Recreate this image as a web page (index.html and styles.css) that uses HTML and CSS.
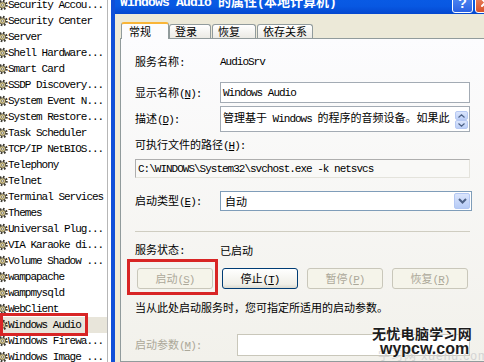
FILE: index.html
```html
<!DOCTYPE html>
<html lang="zh-CN">
<head>
    <meta charset="UTF-8">
    <title>Windows Audio 的属性</title>
    <link rel="stylesheet" href="styles.css">
</head>
<body>
    <div class="services">
        <div class="service-list">
            <div class="service"><svg width="11" height="12" viewBox="0 0 12 12"><circle cx="6" cy="6" r="4.4" fill="none" stroke="#3d3a30" stroke-width="2.6" stroke-dasharray="1.7 1.75"/><circle cx="6" cy="6" r="3.4" fill="#d8c98e" stroke="#3d3a30" stroke-width="0.8"/><circle cx="6" cy="6" r="1.2" fill="#fff" stroke="#3d3a30" stroke-width="0.6"/></svg><span class="lat">Security Accou...</span></div>
            <div class="service"><svg width="11" height="12" viewBox="0 0 12 12"><circle cx="6" cy="6" r="4.4" fill="none" stroke="#3d3a30" stroke-width="2.6" stroke-dasharray="1.7 1.75"/><circle cx="6" cy="6" r="3.4" fill="#d8c98e" stroke="#3d3a30" stroke-width="0.8"/><circle cx="6" cy="6" r="1.2" fill="#fff" stroke="#3d3a30" stroke-width="0.6"/></svg><span class="lat">Security Center</span></div>
            <div class="service"><svg width="11" height="12" viewBox="0 0 12 12"><circle cx="6" cy="6" r="4.4" fill="none" stroke="#3d3a30" stroke-width="2.6" stroke-dasharray="1.7 1.75"/><circle cx="6" cy="6" r="3.4" fill="#d8c98e" stroke="#3d3a30" stroke-width="0.8"/><circle cx="6" cy="6" r="1.2" fill="#fff" stroke="#3d3a30" stroke-width="0.6"/></svg><span class="lat">Server</span></div>
            <div class="service"><svg width="11" height="12" viewBox="0 0 12 12"><circle cx="6" cy="6" r="4.4" fill="none" stroke="#3d3a30" stroke-width="2.6" stroke-dasharray="1.7 1.75"/><circle cx="6" cy="6" r="3.4" fill="#d8c98e" stroke="#3d3a30" stroke-width="0.8"/><circle cx="6" cy="6" r="1.2" fill="#fff" stroke="#3d3a30" stroke-width="0.6"/></svg><span class="lat">Shell Hardware...</span></div>
            <div class="service"><svg width="11" height="12" viewBox="0 0 12 12"><circle cx="6" cy="6" r="4.4" fill="none" stroke="#3d3a30" stroke-width="2.6" stroke-dasharray="1.7 1.75"/><circle cx="6" cy="6" r="3.4" fill="#d8c98e" stroke="#3d3a30" stroke-width="0.8"/><circle cx="6" cy="6" r="1.2" fill="#fff" stroke="#3d3a30" stroke-width="0.6"/></svg><span class="lat">Smart Card</span></div>
            <div class="service"><svg width="11" height="12" viewBox="0 0 12 12"><circle cx="6" cy="6" r="4.4" fill="none" stroke="#3d3a30" stroke-width="2.6" stroke-dasharray="1.7 1.75"/><circle cx="6" cy="6" r="3.4" fill="#d8c98e" stroke="#3d3a30" stroke-width="0.8"/><circle cx="6" cy="6" r="1.2" fill="#fff" stroke="#3d3a30" stroke-width="0.6"/></svg><span class="lat">SSDP Discovery...</span></div>
            <div class="service"><svg width="11" height="12" viewBox="0 0 12 12"><circle cx="6" cy="6" r="4.4" fill="none" stroke="#3d3a30" stroke-width="2.6" stroke-dasharray="1.7 1.75"/><circle cx="6" cy="6" r="3.4" fill="#d8c98e" stroke="#3d3a30" stroke-width="0.8"/><circle cx="6" cy="6" r="1.2" fill="#fff" stroke="#3d3a30" stroke-width="0.6"/></svg><span class="lat">System Event N...</span></div>
            <div class="service"><svg width="11" height="12" viewBox="0 0 12 12"><circle cx="6" cy="6" r="4.4" fill="none" stroke="#3d3a30" stroke-width="2.6" stroke-dasharray="1.7 1.75"/><circle cx="6" cy="6" r="3.4" fill="#d8c98e" stroke="#3d3a30" stroke-width="0.8"/><circle cx="6" cy="6" r="1.2" fill="#fff" stroke="#3d3a30" stroke-width="0.6"/></svg><span class="lat">System Restore...</span></div>
            <div class="service"><svg width="11" height="12" viewBox="0 0 12 12"><circle cx="6" cy="6" r="4.4" fill="none" stroke="#3d3a30" stroke-width="2.6" stroke-dasharray="1.7 1.75"/><circle cx="6" cy="6" r="3.4" fill="#d8c98e" stroke="#3d3a30" stroke-width="0.8"/><circle cx="6" cy="6" r="1.2" fill="#fff" stroke="#3d3a30" stroke-width="0.6"/></svg><span class="lat">Task Scheduler</span></div>
            <div class="service"><svg width="11" height="12" viewBox="0 0 12 12"><circle cx="6" cy="6" r="4.4" fill="none" stroke="#3d3a30" stroke-width="2.6" stroke-dasharray="1.7 1.75"/><circle cx="6" cy="6" r="3.4" fill="#d8c98e" stroke="#3d3a30" stroke-width="0.8"/><circle cx="6" cy="6" r="1.2" fill="#fff" stroke="#3d3a30" stroke-width="0.6"/></svg><span class="lat">TCP/IP NetBIOS...</span></div>
            <div class="service"><svg width="11" height="12" viewBox="0 0 12 12"><circle cx="6" cy="6" r="4.4" fill="none" stroke="#3d3a30" stroke-width="2.6" stroke-dasharray="1.7 1.75"/><circle cx="6" cy="6" r="3.4" fill="#d8c98e" stroke="#3d3a30" stroke-width="0.8"/><circle cx="6" cy="6" r="1.2" fill="#fff" stroke="#3d3a30" stroke-width="0.6"/></svg><span class="lat">Telephony</span></div>
            <div class="service"><svg width="11" height="12" viewBox="0 0 12 12"><circle cx="6" cy="6" r="4.4" fill="none" stroke="#3d3a30" stroke-width="2.6" stroke-dasharray="1.7 1.75"/><circle cx="6" cy="6" r="3.4" fill="#d8c98e" stroke="#3d3a30" stroke-width="0.8"/><circle cx="6" cy="6" r="1.2" fill="#fff" stroke="#3d3a30" stroke-width="0.6"/></svg><span class="lat">Telnet</span></div>
            <div class="service"><svg width="11" height="12" viewBox="0 0 12 12"><circle cx="6" cy="6" r="4.4" fill="none" stroke="#3d3a30" stroke-width="2.6" stroke-dasharray="1.7 1.75"/><circle cx="6" cy="6" r="3.4" fill="#d8c98e" stroke="#3d3a30" stroke-width="0.8"/><circle cx="6" cy="6" r="1.2" fill="#fff" stroke="#3d3a30" stroke-width="0.6"/></svg><span class="lat">Terminal Services</span></div>
            <div class="service"><svg width="11" height="12" viewBox="0 0 12 12"><circle cx="6" cy="6" r="4.4" fill="none" stroke="#3d3a30" stroke-width="2.6" stroke-dasharray="1.7 1.75"/><circle cx="6" cy="6" r="3.4" fill="#d8c98e" stroke="#3d3a30" stroke-width="0.8"/><circle cx="6" cy="6" r="1.2" fill="#fff" stroke="#3d3a30" stroke-width="0.6"/></svg><span class="lat">Themes</span></div>
            <div class="service"><svg width="11" height="12" viewBox="0 0 12 12"><circle cx="6" cy="6" r="4.4" fill="none" stroke="#3d3a30" stroke-width="2.6" stroke-dasharray="1.7 1.75"/><circle cx="6" cy="6" r="3.4" fill="#d8c98e" stroke="#3d3a30" stroke-width="0.8"/><circle cx="6" cy="6" r="1.2" fill="#fff" stroke="#3d3a30" stroke-width="0.6"/></svg><span class="lat">Universal Plug...</span></div>
            <div class="service"><svg width="11" height="12" viewBox="0 0 12 12"><circle cx="6" cy="6" r="4.4" fill="none" stroke="#3d3a30" stroke-width="2.6" stroke-dasharray="1.7 1.75"/><circle cx="6" cy="6" r="3.4" fill="#d8c98e" stroke="#3d3a30" stroke-width="0.8"/><circle cx="6" cy="6" r="1.2" fill="#fff" stroke="#3d3a30" stroke-width="0.6"/></svg><span class="lat">VIA Karaoke di...</span></div>
            <div class="service"><svg width="11" height="12" viewBox="0 0 12 12"><circle cx="6" cy="6" r="4.4" fill="none" stroke="#3d3a30" stroke-width="2.6" stroke-dasharray="1.7 1.75"/><circle cx="6" cy="6" r="3.4" fill="#d8c98e" stroke="#3d3a30" stroke-width="0.8"/><circle cx="6" cy="6" r="1.2" fill="#fff" stroke="#3d3a30" stroke-width="0.6"/></svg><span class="lat">Volume Shadow ...</span></div>
            <div class="service"><svg width="11" height="12" viewBox="0 0 12 12"><circle cx="6" cy="6" r="4.4" fill="none" stroke="#3d3a30" stroke-width="2.6" stroke-dasharray="1.7 1.75"/><circle cx="6" cy="6" r="3.4" fill="#d8c98e" stroke="#3d3a30" stroke-width="0.8"/><circle cx="6" cy="6" r="1.2" fill="#fff" stroke="#3d3a30" stroke-width="0.6"/></svg><span class="lat">wampapache</span></div>
            <div class="service"><svg width="11" height="12" viewBox="0 0 12 12"><circle cx="6" cy="6" r="4.4" fill="none" stroke="#3d3a30" stroke-width="2.6" stroke-dasharray="1.7 1.75"/><circle cx="6" cy="6" r="3.4" fill="#d8c98e" stroke="#3d3a30" stroke-width="0.8"/><circle cx="6" cy="6" r="1.2" fill="#fff" stroke="#3d3a30" stroke-width="0.6"/></svg><span class="lat">wampmysqld</span></div>
            <div class="service"><svg width="11" height="12" viewBox="0 0 12 12"><circle cx="6" cy="6" r="4.4" fill="none" stroke="#3d3a30" stroke-width="2.6" stroke-dasharray="1.7 1.75"/><circle cx="6" cy="6" r="3.4" fill="#d8c98e" stroke="#3d3a30" stroke-width="0.8"/><circle cx="6" cy="6" r="1.2" fill="#fff" stroke="#3d3a30" stroke-width="0.6"/></svg><span class="lat">WebClient</span></div>
            <div class="service selected"><svg width="11" height="12" viewBox="0 0 12 12"><circle cx="6" cy="6" r="4.4" fill="none" stroke="#3d3a30" stroke-width="2.6" stroke-dasharray="1.7 1.75"/><circle cx="6" cy="6" r="3.4" fill="#d8c98e" stroke="#3d3a30" stroke-width="0.8"/><circle cx="6" cy="6" r="1.2" fill="#fff" stroke="#3d3a30" stroke-width="0.6"/></svg><span class="lat">Windows Audio</span><div class="mark"></div></div>
            <div class="service"><svg width="11" height="12" viewBox="0 0 12 12"><circle cx="6" cy="6" r="4.4" fill="none" stroke="#3d3a30" stroke-width="2.6" stroke-dasharray="1.7 1.75"/><circle cx="6" cy="6" r="3.4" fill="#d8c98e" stroke="#3d3a30" stroke-width="0.8"/><circle cx="6" cy="6" r="1.2" fill="#fff" stroke="#3d3a30" stroke-width="0.6"/></svg><span class="lat">Windows Firewa...</span></div>
            <div class="service"><svg width="11" height="12" viewBox="0 0 12 12"><circle cx="6" cy="6" r="4.4" fill="none" stroke="#3d3a30" stroke-width="2.6" stroke-dasharray="1.7 1.75"/><circle cx="6" cy="6" r="3.4" fill="#d8c98e" stroke="#3d3a30" stroke-width="0.8"/><circle cx="6" cy="6" r="1.2" fill="#fff" stroke="#3d3a30" stroke-width="0.6"/></svg><span class="lat">Windows Image ...</span></div>
        </div>
    </div>

    <div class="dialog">
        <div class="titlebar">
            <span class="title"><span class="lat">Windows Audio </span>的属性<span class="lat">(</span>本地计算机<span class="lat">)</span></span>
            <div class="title-btn help">?</div>
            <div class="title-btn close">
                <svg width="11" height="11" viewBox="0 0 11 11"><path d="M2 2l7 7M9 2l-7 7" stroke="#fff" stroke-width="2" stroke-linecap="round"/></svg>
            </div>
        </div>

        <div class="sheet">
            <div class="tabs">
                <div class="tab active">常规</div>
                <div class="tab tab-login">登录</div>
                <div class="tab tab-recover">恢复</div>
                <div class="tab tab-deps">依存关系</div>
            </div>

            <div class="panel">
                <div class="field">
                    <span class="label">服务名称<span class="lat">:</span></span>
                    <span class="lat">AudioSrv</span>
                </div>

                <div class="field field-name">
                    <span class="label">显示名称<span class="lat">(<u>N</u>):</span></span>
                    <div class="textbox name-box"><span class="lat">Windows Audio</span></div>
                </div>

                <div class="field field-desc">
                    <span class="label">描述<span class="lat">(<u>D</u>):</span></span>
                    <div class="textbox desc-box">
                        <span class="desc-text">管理基于<span class="lat"> Windows </span>的程序的音频设备。如果此</span>
                        <div class="spin">
                            <div class="spin-btn"><svg width="7" height="4" viewBox="0 0 7 4"><path d="M0.5 3.5L3.5 0.8L6.5 3.5" fill="none" stroke="#4d6185" stroke-width="1.2"/></svg></div>
                            <div class="spin-btn"><svg width="7" height="4" viewBox="0 0 7 4"><path d="M0.5 0.5L3.5 3.2L6.5 0.5" fill="none" stroke="#4d6185" stroke-width="1.2"/></svg></div>
                        </div>
                    </div>
                </div>

                <div class="field field-path-label">
                    <span>可执行文件的路径<span class="lat">(<u>H</u>):</span></span>
                </div>

                <div class="textbox path-box"><span class="lat">C:\WINDOWS\System32\svchost.exe -k netsvcs</span></div>

                <div class="field field-start">
                    <span class="label">启动类型<span class="lat">(<u>E</u>):</span></span>
                    <div class="select">
                        <span>自动</span>
                        <div class="drop">
                            <svg width="9" height="6" viewBox="0 0 9 6"><path d="M1 1l3.5 3.5L8 1" fill="none" stroke="#4d6185" stroke-width="2"/></svg>
                        </div>
                    </div>
                </div>

                <div class="separator"></div>

                <div class="field field-status">
                    <span class="label">服务状态<span class="lat">:</span></span>
                    <span>已启动</span>
                </div>

                <div class="actions">
                    <div class="action-wrap">
                        <button class="btn" disabled>启动<span class="lat">(<u>S</u>)</span></button>
                        <div class="mark"></div>
                    </div>
                    <button class="btn">停止<span class="lat">(<u>T</u>)</span></button>
                    <button class="btn" disabled>暂停<span class="lat">(<u>P</u>)</span></button>
                    <button class="btn" disabled>恢复<span class="lat">(<u>R</u>)</span></button>
                </div>

                <div class="note">当从此处启动服务时，您可指定所适用的启动参数。</div>

                <div class="field field-params">
                    <span class="label label-wide disabled">启动参数<span class="lat">(<u>M</u>):</span></span>
                    <div class="textbox params-box"></div>
                </div>
            </div>
        </div>
    </div>

    <div class="watermark">
        <div class="wm-faint">学习网 xuehu.com</div>
        <div class="wm-cn">无忧电脑学习网</div>
        <div class="wm-en">wypcw.com</div>
    </div>
</body>
</html>
```

FILE: styles.css
```css
body {
    margin: 0;
    width: 484px;
    height: 362px;
    overflow: hidden;
    display: flex;
    background: #fff;
    color: #000;
    font-family: "Noto Sans CJK SC", sans-serif;
    font-size: 11px;
    line-height: 16px;
}

.lat {
    font-family: "Liberation Mono", monospace;
    letter-spacing: -1px;
}

/* service list on the left */
.services {
    width: 107px;
    flex: none;
    border-right: 1px solid #b7b7b7;
    overflow: hidden;
}

.service-list {
    margin-top: -3px;
}

.service {
    position: relative;
    height: 16px;
    display: flex;
    align-items: center;
    white-space: nowrap;
}

.service svg {
    flex: none;
    margin-left: -3px;
}

.service.selected {
    background: #e8e5da;
}

.mark {
    position: absolute;
    box-sizing: border-box;
    border: 3px solid #d82525;
}

.service .mark {
    left: 0;
    top: -4px;
    width: 88px;
    height: 23px;
}

/* properties dialog */
.dialog {
    flex: none;
    width: 386px;
    height: 374px;
    margin: -12px 0 0 3px;
    border-left: 4px solid #0f4fd8;
    background: #ece9d8;
    display: flex;
    flex-direction: column;
}

.titlebar {
    height: 26px;
    box-sizing: border-box;
    padding: 2px 5px 0 5px;
    display: flex;
    align-items: center;
    background: linear-gradient(#0a5ee8, #0858e2 70%, #0447cf);
    color: #fff;
    font-weight: bold;
    font-size: 13px;
    white-space: nowrap;
}

.title .lat {
    letter-spacing: -0.8px;
}

.title-btn {
    width: 21px;
    height: 21px;
    box-sizing: border-box;
    align-self: flex-end;
    margin: 0 0 1px 2px;
    border: 1px solid #fff;
    border-radius: 3px;
    display: flex;
    align-items: center;
    justify-content: center;
    font-family: "Liberation Sans", sans-serif;
    font-size: 14px;
}

.help {
    margin-left: auto;
    background: linear-gradient(#5a93f8, #2c62e2);
}

.close {
    background: linear-gradient(#ef906e, #d7522b);
}

.sheet {
    flex: 1;
    display: flex;
    flex-direction: column;
    padding: 8px 7px 0 5px;
}

.tabs {
    height: 17px;
    display: flex;
    align-items: flex-end;
    margin: 0 0 -1px 1px;
    position: relative;
    z-index: 1;
}

.tab {
    height: 14px;
    box-sizing: border-box;
    margin-bottom: 1px;
    padding-left: 5px;
    border: 1px solid #919b9c;
    border-bottom: none;
    border-radius: 3px 3px 0 0;
    background: linear-gradient(#ffffff, #ebeae4);
    line-height: 13px;
}

.tab.active {
    width: 48px;
    height: 17px;
    margin-bottom: 0;
    padding-left: 7px;
    border-top: 2px solid #f9b538;
    background: #fcfcfe;
    line-height: 14px;
}

.tab-login {
    width: 42px;
}

.tab-recover {
    width: 44px;
    margin-left: 1px;
}

.tab-deps {
    width: 56px;
    margin-left: 1px;
}

.panel {
    flex: 1;
    border: 1px solid #919b9c;
    background: linear-gradient(#fcfcfe, #f2f1eb);
    padding: 14px 0 0 14px;
}

.field {
    display: flex;
    align-items: center;
    min-height: 16px;
}

.label {
    width: 85px;
    flex: none;
}

.label-wide {
    width: 102px;
}

.disabled {
    color: #aca899;
}

.textbox {
    box-sizing: border-box;
    border: 1px solid #a3abb4;
    background: #fff;
    display: flex;
    align-items: center;
    padding-left: 2px;
}

.field-name {
    margin-top: 11px;
}

.name-box {
    width: 250px;
    height: 21px;
}

.field-desc {
    margin-top: 3px;
}

.desc-box {
    width: 250px;
    height: 26px;
    align-items: flex-start;
    justify-content: space-between;
    padding: 3px 0 0 2px;
}

.desc-text {
    white-space: nowrap;
    line-height: 14px;
}

.spin {
    display: flex;
    flex-direction: column;
    margin: 1px 1px 0 0;
}

.spin-btn {
    width: 13px;
    height: 9px;
    box-sizing: border-box;
    border: 1px solid #b7c9f3;
    border-radius: 2px;
    background: linear-gradient(#dbe5fc, #bccff7);
    display: flex;
    align-items: center;
    justify-content: center;
}

.field-path-label {
    margin-top: 4px;
}

.path-box {
    width: 335px;
    height: 19px;
    margin-top: 5px;
    border-color: #aeaeae #e4e3dc #e4e3dc #aeaeae;
    background: #f9f9f7;
}

.field-start {
    margin-top: 13px;
}

.select {
    width: 252px;
    height: 20px;
    box-sizing: border-box;
    border: 1px solid #7f9db9;
    background: #fff;
    display: flex;
    align-items: center;
    justify-content: space-between;
    padding-left: 4px;
}

.drop {
    width: 16px;
    height: 16px;
    margin-right: 1px;
    box-sizing: border-box;
    border: 1px solid #b3c7f3;
    border-radius: 2px;
    background: linear-gradient(#dbe5fc, #b6cbf6);
    display: flex;
    align-items: center;
    justify-content: center;
}

.separator {
    width: 335px;
    margin-top: 20px;
    border-top: 1px solid #cfcdc1;
}

.field-status {
    margin-top: 9px;
}

.actions {
    display: flex;
    gap: 9px;
    margin: 9px 0 0 2px;
}

.action-wrap {
    position: relative;
    display: flex;
}

.btn {
    width: 76px;
    height: 21px;
    padding: 0;
    border: 1px solid #003c74;
    border-radius: 3px;
    background: linear-gradient(#ffffff, #f0efe8 80%, #dcdad0);
    color: #000;
    font-family: "Noto Sans CJK SC", sans-serif;
    font-size: 11px;
    line-height: 16px;
}

.btn:disabled {
    border-color: #c9c7ba;
    background: #f5f4ea;
    color: #aca899;
}

.action-wrap .mark {
    left: -10px;
    top: -9px;
    width: 91px;
    height: 36px;
}

.note {
    margin-top: 10px;
}

.field-params {
    margin-top: 19px;
}

.params-box {
    width: 233px;
    height: 22px;
    border-color: #c9c7ba;
}

/* site watermark in the corner */
.watermark {
    position: absolute;
    left: 372px;
    top: 325px;
    width: 112px;
    height: 37px;
}

.wm-faint {
    position: absolute;
    left: 6px;
    top: 25px;
    color: #d4d4d4;
    font-family: "Liberation Sans", sans-serif;
    font-size: 12px;
    line-height: 12px;
    white-space: nowrap;
    letter-spacing: 1px;
}

.wm-cn {
    position: relative;
    font-size: 14px;
    font-weight: bold;
    line-height: 17px;
    color: #1c1c1c;
    letter-spacing: 0.3px;
    text-shadow: 0 0 2px #fff, 0 0 2px #fff;
}

.wm-en {
    position: relative;
    margin-left: 8px;
    font-family: "Liberation Sans", sans-serif;
    font-size: 16px;
    font-weight: bold;
    line-height: 13px;
    color: #1c1c1c;
    text-shadow: 0 0 2px #fff, 0 0 2px #fff;
}
```
